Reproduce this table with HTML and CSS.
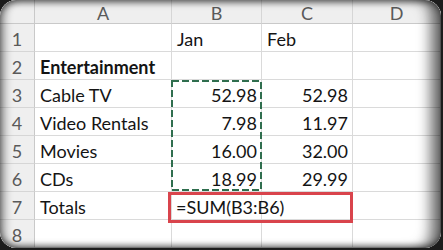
FILE: index.html
```html
<!DOCTYPE html>
<html>
<head>
<meta charset="utf-8">
<link rel="stylesheet" href="styles.css">
</head>
<body>
<div class="sheet">
  <div class="grid">
    <div class="corner"></div>
    <div class="colh">A</div>
    <div class="colh">B</div>
    <div class="colh">C</div>
    <div class="colh">D</div>

    <div class="rowh">1</div>
    <div class="cell"></div>
    <div class="cell">Jan</div>
    <div class="cell">Feb</div>
    <div class="cell"></div>

    <div class="rowh">2</div>
    <div class="cell bold">Entertainment</div>
    <div class="cell"></div>
    <div class="cell"></div>
    <div class="cell"></div>

    <div class="rowh">3</div>
    <div class="cell">Cable TV</div>
    <div class="cell num">52.98</div>
    <div class="cell num">52.98</div>
    <div class="cell"></div>

    <div class="rowh">4</div>
    <div class="cell">Video Rentals</div>
    <div class="cell num">7.98</div>
    <div class="cell num">11.97</div>
    <div class="cell"></div>

    <div class="rowh">5</div>
    <div class="cell">Movies</div>
    <div class="cell num">16.00</div>
    <div class="cell num">32.00</div>
    <div class="cell"></div>

    <div class="rowh">6</div>
    <div class="cell">CDs</div>
    <div class="cell num">18.99</div>
    <div class="cell num">29.99</div>
    <div class="cell"></div>

    <div class="rowh">7</div>
    <div class="cell">Totals</div>
    <div class="cell formula">=SUM(B3:B6)</div>
    <div class="cell"></div>
    <div class="cell"></div>

    <div class="rowh">8</div>
    <div class="cell"></div>
    <div class="cell"></div>
    <div class="cell"></div>
    <div class="cell"></div>

    <svg class="ants" width="92" height="112" viewBox="0 0 92 112">
      <rect x="1" y="1" width="89" height="109" fill="none" stroke="#2f6e4e" stroke-width="2" stroke-dasharray="7 3"/>
    </svg>
    <div class="edit"></div>
  </div>
  <div class="shade"></div>
</div>
</body>
</html>
```

FILE: styles.css
```css
html, body {
  margin: 0;
  padding: 0;
  background: #1c1c1c;
}
body {
  width: 443px;
  height: 250px;
  overflow: hidden;
}
.sheet {
  position: relative;
  width: 441px;
  height: 248px;
  border-radius: 16px;
  overflow: hidden;
  background: #fff;
  font-family: Lato, "Open Sans", sans-serif;
  font-size: 18px;
  color: #141414;
}
.grid {
  position: relative;
  display: grid;
  grid-template-columns: 35px 137px 90px 91px 88px;
  grid-template-rows: 24px repeat(8, 28px);
}
.corner, .colh, .rowh {
  background: #efefef;
  color: #5a5a5a;
  box-sizing: border-box;
  display: flex;
  align-items: center;
  justify-content: center;
}
.corner {
  border-right: 1px solid #c9c9c9;
  border-bottom: 1px solid #c9c9c9;
}
.colh {
  border-right: 1px solid #d6d6d6;
  border-bottom: 1px solid #c9c9c9;
  padding-top: 2px;
}
.rowh {
  border-right: 1px solid #c9c9c9;
  border-bottom: 1px solid #d6d6d6;
  padding-top: 2px;
}
.cell {
  box-sizing: border-box;
  border-right: 1px solid #dadada;
  border-bottom: 1px solid #dadada;
  display: flex;
  align-items: center;
  padding: 2px 4px 0 5px;
  white-space: nowrap;
}
.bold {
  font-weight: 700;
}
.num {
  justify-content: flex-end;
}
.formula {
  overflow: visible;
  padding-left: 4px;
}
.ants {
  position: absolute;
  left: 171px;
  top: 80px;
}
.edit {
  position: absolute;
  left: 168px;
  top: 192px;
  width: 185px;
  height: 31px;
  box-sizing: border-box;
  border: 3px solid #d9444c;
}
.shade {
  position: absolute;
  inset: 0;
  border-radius: 16px;
  pointer-events: none;
  box-shadow:
    inset 7px 0 9px -3px rgba(0,0,0,0.45),
    inset -16px 0 14px -6px rgba(0,0,0,0.6),
    inset 0 5px 7px -3px rgba(0,0,0,0.55),
    inset 0 -5px 6px -3px rgba(0,0,0,0.5);
}
```
